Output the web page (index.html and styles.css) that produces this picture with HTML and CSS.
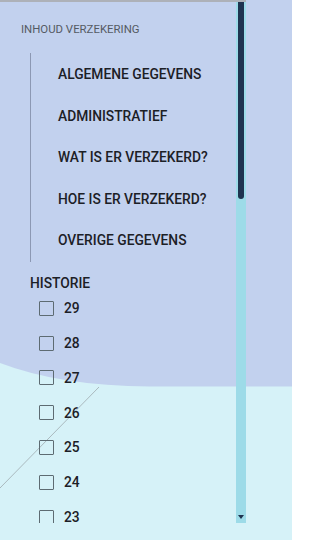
FILE: index.html
```html
<!DOCTYPE html>
<html lang="nl">
<head>
<meta charset="utf-8">
<link rel="stylesheet" href="styles.css">
</head>
<body>
<div class="frame">
  <svg class="backdrop" width="292" height="540" viewBox="0 0 292 540" aria-hidden="true">
    <rect x="0" y="0" width="292" height="540" fill="#d6f2f8"/>
    <path d="M0 0 H292 V386.5 H150 Q60 386 0 363 Z" fill="#c2d1ee"/>
    <line x1="0" y1="488" x2="99" y2="387" stroke="#aab9be" stroke-width="1"/>
  </svg>
  <div class="panel">
    <div class="content">
      <div class="section-title">INHOUD VERZEKERING</div>
      <ul class="nav">
        <li class="nav-item">ALGEMENE GEGEVENS</li>
        <li class="nav-item">ADMINISTRATIEF</li>
        <li class="nav-item">WAT IS ER VERZEKERD?</li>
        <li class="nav-item">HOE IS ER VERZEKERD?</li>
        <li class="nav-item">OVERIGE GEGEVENS</li>
      </ul>
      <div class="history-title">HISTORIE</div>
      <ul class="history">
        <li class="row"><span class="box"></span><span class="num">29</span></li>
        <li class="row"><span class="box"></span><span class="num">28</span></li>
        <li class="row"><span class="box"></span><span class="num">27</span></li>
        <li class="row"><span class="box"></span><span class="num">26</span></li>
        <li class="row"><span class="box"></span><span class="num">25</span></li>
        <li class="row"><span class="box"></span><span class="num">24</span></li>
        <li class="row"><span class="box"></span><span class="num">23</span></li>
      </ul>
    </div>
    <div class="scrollbar">
      <div class="thumb"></div>
      <div class="arrow"></div>
    </div>
  </div>
</div>
</body>
</html>
```
FILE: styles.css
```css
html, body {
  margin: 0;
  padding: 0;
}
body {
  width: 292px;
  height: 540px;
  overflow: hidden;
  font-family: Roboto, "Liberation Sans", sans-serif;
  color: #1c2026;
}
.frame {
  position: relative;
  width: 292px;
  height: 540px;
}
.backdrop {
  position: absolute;
  left: 0;
  top: 0;
  z-index: 0;
}
.panel {
  position: relative;
  z-index: 1;
  border-top: 2px solid #adb1b8;
  display: flex;
  width: 246px;
}
.content {
  width: 236px;
  height: 521px;
  overflow: hidden;
}
.section-title {
  font-size: 11.4px;
  line-height: 16px;
  color: #555b63;
  padding: 19px 0 0 21px;
}
.nav {
  list-style: none;
  margin: 16px 0 0 30px;
  padding: 1px 0 0 0;
  border-left: 1.5px solid #8c98b3;
}
.nav-item {
  height: 41.5px;
  line-height: 41.5px;
  font-size: 13.8px;
  font-weight: 500;
  padding-left: 27px;
  color: #1c2026;
}
.history-title {
  font-size: 13.8px;
  font-weight: 500;
  line-height: 16px;
  margin: 13.4px 0 0 30px;
}
.history {
  list-style: none;
  margin: 0;
  padding: 0 0 0 39px;
}
.row {
  height: 34.8px;
  display: flex;
  align-items: center;
  gap: 10px;
}
.box {
  width: 13px;
  height: 13px;
  border: 1.6px solid #5d6b72;
  border-radius: 1px;
  flex: none;
}
.num {
  font-size: 13.8px;
  font-weight: 500;
}
.scrollbar {
  position: relative;
  width: 10px;
  height: 521px;
  background: #9ddbe8;
  display: flex;
  flex-direction: column;
  align-items: center;
}
.thumb {
  width: 6px;
  height: 197px;
  background: #1f3350;
  border-radius: 0 0 3px 3px;
}
.arrow {
  margin-top: auto;
  margin-bottom: 4px;
  width: 0;
  height: 0;
  border-left: 3.5px solid transparent;
  border-right: 3.5px solid transparent;
  border-top: 4px solid #1f3350;
}
```
